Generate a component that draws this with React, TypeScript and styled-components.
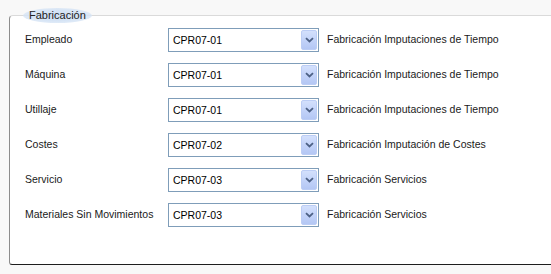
import React from 'react';
import styled, { createGlobalStyle } from 'styled-components';

const GlobalStyle = createGlobalStyle`
  html, body {
    margin: 0;
    padding: 0;
    background: #f8f8f8;
    font-family: "Liberation Sans", Arial, sans-serif;
    font-size: 10.5px;
    color: #1a1a1a;
  }
`;

const ROWS = [
    { label: 'Empleado', code: 'CPR07-01', desc: 'Fabricación Imputaciones de Tiempo' },
    { label: 'Máquina', code: 'CPR07-01', desc: 'Fabricación Imputaciones de Tiempo' },
    { label: 'Utillaje', code: 'CPR07-01', desc: 'Fabricación Imputaciones de Tiempo' },
    { label: 'Costes', code: 'CPR07-02', desc: 'Fabricación Imputación de Costes' },
    { label: 'Servicio', code: 'CPR07-03', desc: 'Fabricación Servicios' },
    { label: 'Materiales Sin Movimientos', code: 'CPR07-03', desc: 'Fabricación Servicios' },
];

const Page = styled.div`
  padding: 15px 0 0 9px;
  overflow: hidden;
  height: 274px;
  box-sizing: border-box;
`;

const Group = styled.div`
  position: relative;
  width: 560px;
  height: 250px;
  box-sizing: border-box;
  background: #fff;
  border-top: 1px solid #dadada;
  border-left: 1px solid #8c8c8c;
  border-bottom: 1px solid #1e1e1e;
  border-top-left-radius: 4px;
  border-bottom-left-radius: 3px;
  padding: 12px 0 0 15px;
`;

// legend sits over the top border, with the soft blue glow behind it
const Legend = styled.div`
  position: absolute;
  top: -8px;
  left: 13px;
  padding: 1px 6px;
  line-height: 13px;
  font-size: 11px;
  color: #222;
  background: radial-gradient(ellipse at center, #cfdff3 0%, #d6e4f5 50%, rgba(214, 228, 245, 0.7) 75%, rgba(255, 255, 255, 0) 100%);
  border-radius: 50%;
`;

const Rows = styled.div`
  display: flex;
  flex-direction: column;
  gap: 11px;
`;

const Row = styled.div`
  display: grid;
  grid-template-columns: 135px 151px auto;
  column-gap: 8px;
  align-items: center;
  height: 24px;
`;

const Label = styled.span`
  white-space: nowrap;
  padding-bottom: 2px;
`;

const Select = styled.div`
  display: flex;
  align-items: center;
  height: 24px;
  box-sizing: border-box;
  border: 1px solid #7f9db9;
  background: #fff;
  padding: 0 1px 0 4px;
`;

const Value = styled.span`
  flex: 1;
  color: #000;
`;

const DropButton = styled.span`
  width: 16px;
  height: 20px;
  display: flex;
  align-items: center;
  justify-content: center;
  box-sizing: border-box;
  border: 1px solid #bccdf5;
  border-radius: 2px;
  background: linear-gradient(to bottom, #d3e0fc 0%, #c3d3f9 50%, #b4c7f4 100%);
`;

const Desc = styled.span`
  white-space: nowrap;
  color: #1a1a1a;
  padding-bottom: 2px;
`;

const Chevron = () => (
    <svg width="9" height="6" viewBox="0 0 9 6">
        <path d="M1 1.2 L4.5 4.5 L8 1.2" fill="none" stroke="#4d6185" strokeWidth="1.8" />
    </svg>
);

const App = () => (
    <Page>
        <GlobalStyle/>
        <Group>
            <Legend>Fabricación</Legend>
            <Rows>
                {ROWS.map((row, i) =>
                    <Row key={i}>
                        <Label>{row.label}</Label>
                        <Select>
                            <Value>{row.code}</Value>
                            <DropButton><Chevron/></DropButton>
                        </Select>
                        <Desc>{row.desc}</Desc>
                    </Row>
                )}
            </Rows>
        </Group>
    </Page>
);

export default App;
